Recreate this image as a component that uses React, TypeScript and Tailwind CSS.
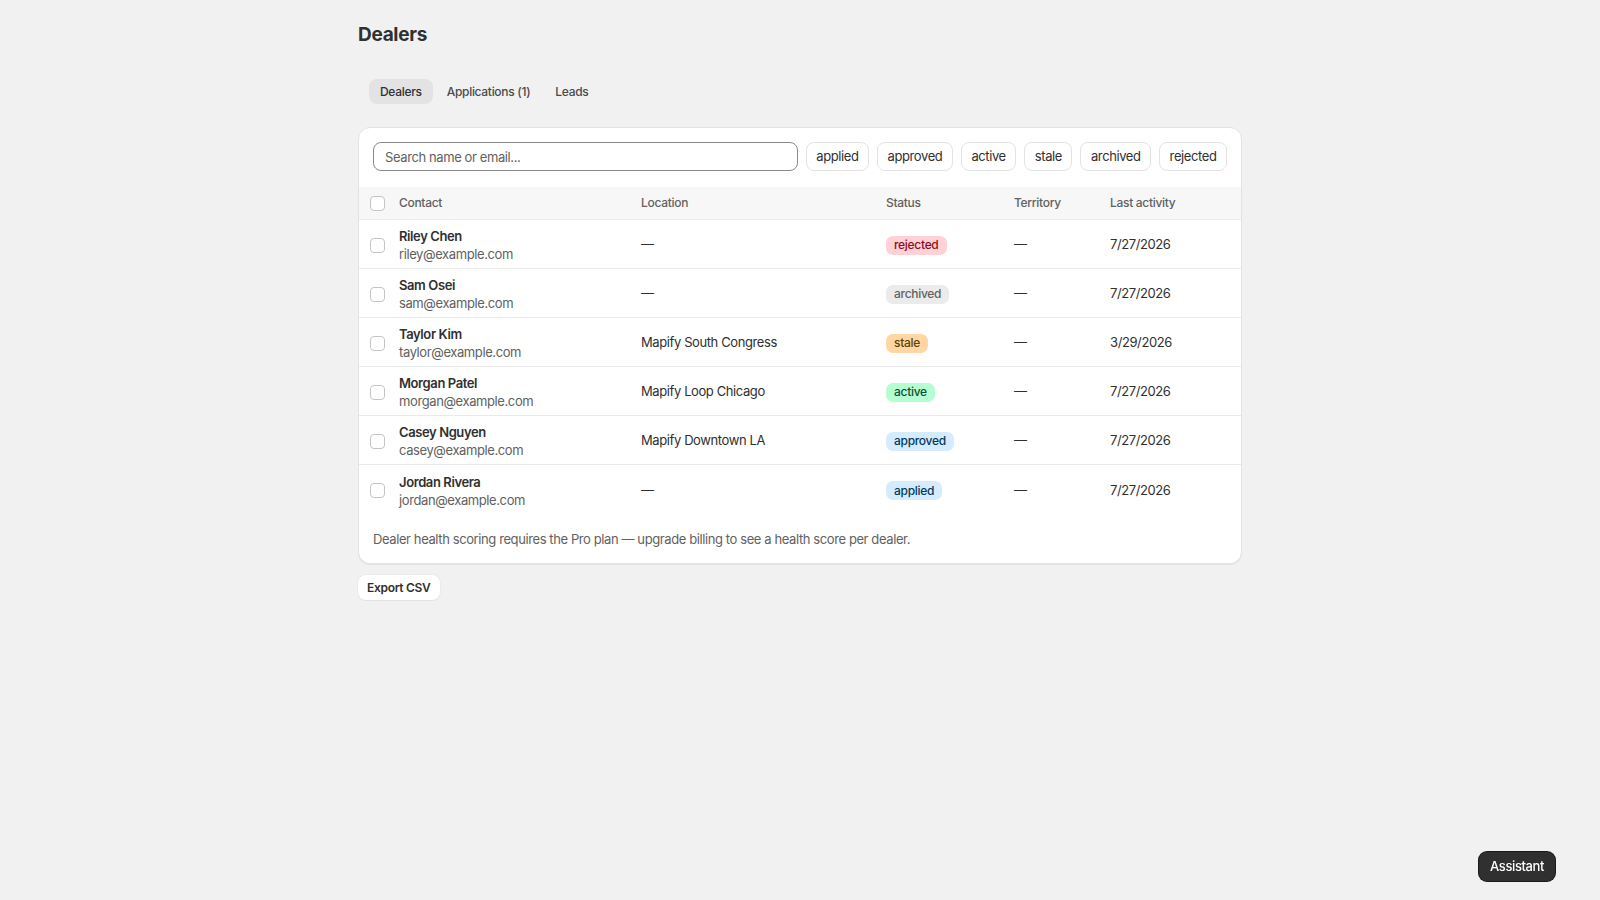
import React, { useState } from 'react';

type Status = 'rejected' | 'archived' | 'stale' | 'active' | 'approved' | 'applied';

interface Dealer {
  name: string;
  email: string;
  location: string | null;
  status: Status;
  territory: string | null;
  lastActivity: string;
}

const dealers: Dealer[] = [
  { name: 'Riley Chen', email: 'riley@example.com', location: null, status: 'rejected', territory: null, lastActivity: '7/27/2026' },
  { name: 'Sam Osei', email: 'sam@example.com', location: null, status: 'archived', territory: null, lastActivity: '7/27/2026' },
  { name: 'Taylor Kim', email: 'taylor@example.com', location: 'Mapify South Congress', status: 'stale', territory: null, lastActivity: '3/29/2026' },
  { name: 'Morgan Patel', email: 'morgan@example.com', location: 'Mapify Loop Chicago', status: 'active', territory: null, lastActivity: '7/27/2026' },
  { name: 'Casey Nguyen', email: 'casey@example.com', location: 'Mapify Downtown LA', status: 'approved', territory: null, lastActivity: '7/27/2026' },
  { name: 'Jordan Rivera', email: 'jordan@example.com', location: null, status: 'applied', territory: null, lastActivity: '7/27/2026' },
];

// badge colours per status
const badgeStyles: Record<Status, string> = {
  rejected: 'bg-[#fed1d7] text-[#8e0b21]',
  archived: 'bg-[#ebebeb] text-[#616161]',
  stale: 'bg-[#ffd6a4] text-[#5e4200]',
  active: 'bg-[#b4fed2] text-[#0c5132]',
  approved: 'bg-[#d5ebff] text-[#003a5a]',
  applied: 'bg-[#d5ebff] text-[#003a5a]',
};

const filters: Status[] = ['applied', 'approved', 'active', 'stale', 'archived', 'rejected'];
const tabs = ['Dealers', 'Applications (1)', 'Leads'];

const gridCols = 'grid grid-cols-[40px_242px_245px_128px_96px_1fr] items-center';

const Checkbox: React.FC = () => (
  <span className="block w-[15px] h-[15px] rounded-[4px] border border-[#c4c4c4] bg-white" />
);

const Badge: React.FC<{ status: Status }> = ({ status }) => (
  <span className={`inline-flex items-center h-[19px] px-[8px] rounded-[7px] text-[12px] font-medium tracking-[-0.3px] ${badgeStyles[status]}`}>
    {status}
  </span>
);

export default function App() {
  const [activeTab, setActiveTab] = useState('Dealers');
  const [query, setQuery] = useState('');

  return (
    <div className="min-h-screen bg-[#f1f1f1] text-[#303030] tracking-[-0.4px] font-['Inter','Liberation_Sans',sans-serif]">
      <div className="w-[884px] mx-auto pt-[22px]">
        <h1 className="text-[19px] leading-[26px] font-bold tracking-[-0.3px] text-[#303030]">Dealers</h1>

        {/* tabs */}
        <div className="flex items-center gap-[3px] mt-[31px] pl-[11px]">
          {tabs.map((t) => (
            <button
              key={t}
              onClick={() => setActiveTab(t)}
              className={`h-[25px] px-[11px] rounded-[8px] text-[12px] font-medium tracking-[-0.3px] ${
                activeTab === t ? 'bg-[#e3e3e3] text-[#303030]' : 'text-[#4a4a4a]'
              }`}
            >
              {t}
            </button>
          ))}
        </div>

        {/* card */}
        <div className="mt-[23px] bg-white border border-[#e3e3e3] rounded-[12px] shadow-[0_1px_0_rgba(0,0,0,0.06)] overflow-hidden">
          <div className="flex items-center gap-[8px] px-[14px] pt-[14px] pb-[16px]">
            <input
              type="text"
              value={query}
              onChange={(e) => setQuery(e.target.value)}
              placeholder="Search name or email..."
              className="flex-1 min-w-0 h-[29px] px-[11px] rounded-[8px] border border-[#8a8a8a] text-[13px] text-[#303030] placeholder-[#616161] outline-none"
            />
            {filters.map((f) => (
              <button
                key={f}
                className="h-[29px] px-[9.5px] rounded-[8px] border border-[#e3e3e3] bg-white text-[13px] text-[#303030]"
              >
                {f}
              </button>
            ))}
          </div>

          {/* header row */}
          <div className={`${gridCols} h-[33px] bg-[#f7f7f7] border-b border-[#ebebeb] text-[12px] font-medium tracking-[-0.3px] text-[#616161]`}>
            <div className="pl-[11px]">
              <Checkbox />
            </div>
            <div>Contact</div>
            <div>Location</div>
            <div>Status</div>
            <div>Territory</div>
            <div>Last activity</div>
          </div>

          {dealers.map((d, i) => (
            <div
              key={d.email}
              className={`${gridCols} h-[49px] pt-[2px] text-[13px] ${i < dealers.length - 1 ? 'border-b border-[#ebebeb]' : ''}`}
            >
              <div className="pl-[11px]">
                <Checkbox />
              </div>
              <div className="flex flex-col leading-[18px]">
                <span className="font-semibold text-[#303030]">{d.name}</span>
                <span className="text-[#616161]">{d.email}</span>
              </div>
              <div className="text-[#303030]">{d.location ?? '—'}</div>
              <div>
                <Badge status={d.status} />
              </div>
              <div className="text-[#303030]">{d.territory ?? '—'}</div>
              <div className="text-[#303030]">{d.lastActivity}</div>
            </div>
          ))}

          <p className="px-[14px] pt-[15px] pb-[14px] text-[13px] leading-[20px] text-[#616161]">
            Dealer health scoring requires the Pro plan — upgrade billing to see a health score per dealer.
          </p>
        </div>

        <button className="mt-[11px] h-[25px] px-[9px] rounded-[8px] bg-white text-[12px] font-semibold tracking-[-0.3px] text-[#303030] shadow-[0_1px_0_#e3e3e3,0_0_0_1px_#ebebeb]">
          Export CSV
        </button>
      </div>

      <button className="fixed right-[45px] bottom-[19px] h-[29px] px-[11px] rounded-[8px] bg-[#303030] text-white text-[13px] font-medium shadow-[0_0_0_1px_#1a1a1a]">
        Assistant
      </button>
    </div>
  );
}
